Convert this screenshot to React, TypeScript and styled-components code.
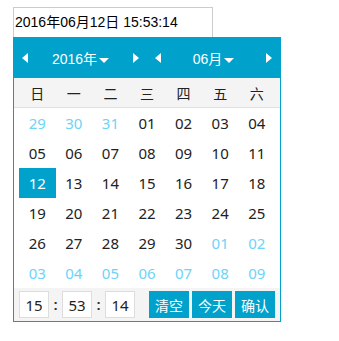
import React from 'react';
import styled, {createGlobalStyle} from "styled-components";

const blue = '#00a2cc';
const lightBlue = '#6dd3f7';

const GlobalStyle = createGlobalStyle`
    body {
        margin: 0;
        background: #fff;
        font-family: "Liberation Sans", "Noto Sans CJK SC", sans-serif;
    }
`

type Day = { n: string; other?: boolean; active?: boolean };

const weeks: Day[][] = [
    [{n: '29', other: true}, {n: '30', other: true}, {n: '31', other: true}, {n: '01'}, {n: '02'}, {n: '03'}, {n: '04'}],
    [{n: '05'}, {n: '06'}, {n: '07'}, {n: '08'}, {n: '09'}, {n: '10'}, {n: '11'}],
    [{n: '12', active: true}, {n: '13'}, {n: '14'}, {n: '15'}, {n: '16'}, {n: '17'}, {n: '18'}],
    [{n: '19'}, {n: '20'}, {n: '21'}, {n: '22'}, {n: '23'}, {n: '24'}, {n: '25'}],
    [{n: '26'}, {n: '27'}, {n: '28'}, {n: '29'}, {n: '30'}, {n: '01', other: true}, {n: '02', other: true}],
    [{n: '03', other: true}, {n: '04', other: true}, {n: '05', other: true}, {n: '06', other: true}, {n: '07', other: true}, {n: '08', other: true}, {n: '09', other: true}],
];

const weekNames = ['日', '一', '二', '三', '四', '五', '六'];

export default function App() {
    return (
        <Page>
            <GlobalStyle/>
            <DateInput>2016年06月12日 15:53:14</DateInput>
            <Picker>
                <Header>
                    <Switcher>
                        <Arrow dir="left"/>
                        <Title>2016年<Caret/></Title>
                        <Arrow dir="right"/>
                    </Switcher>
                    <Switcher>
                        <Arrow dir="left"/>
                        <Title>06月<Caret/></Title>
                        <Arrow dir="right"/>
                    </Switcher>
                </Header>
                <WeekRow>
                    {weekNames.map(w => <WeekCell key={w}>{w}</WeekCell>)}
                </WeekRow>
                <Days>
                    {weeks.flat().map((d, i) => (
                        <DayCell key={i} $other={d.other} $active={d.active}>{d.n}</DayCell>
                    ))}
                </Days>
                <Footer>
                    <Time>
                        <TimeBox>15</TimeBox>
                        <Colon>:</Colon>
                        <TimeBox>53</TimeBox>
                        <Colon>:</Colon>
                        <TimeBox>14</TimeBox>
                    </Time>
                    <Buttons>
                        <Button>清空</Button>
                        <Button>今天</Button>
                        <Button>确认</Button>
                    </Buttons>
                </Footer>
            </Picker>
        </Page>
    );
}

const Page = styled.div`
    padding: 7px 0 0 13px;
`

const DateInput = styled.div`
    box-sizing: border-box;
    width: 200px;
    height: 30px;
    border: 1px solid #ccc;
    border-bottom: none;
    padding-left: 1px;
    font-size: 14px;
    line-height: 29px;
    color: #000;
`

const Picker = styled.div`
    box-sizing: border-box;
    width: 268px;
    border: 1px solid ${blue};
    background: #fff;
`

const Header = styled.div`
    height: 40px;
    background: ${blue};
    display: flex;
`

const Switcher = styled.div`
    flex: 1;
    display: flex;
    align-items: center;
    justify-content: space-between;
    padding: 0 8px;
`

const Arrow = styled.span<{ dir: 'left' | 'right' }>`
    width: 0;
    height: 0;
    border-top: 5px solid transparent;
    border-bottom: 5px solid transparent;
    ${p => p.dir === 'left'
            ? 'border-right: 6px solid #fff;'
            : 'border-left: 6px solid #fff;'}
`

const Title = styled.span`
    display: flex;
    align-items: center;
    color: #fff;
    font-size: 14px;
`

const Caret = styled.span`
    margin: 5px 0 0 2px;
    width: 0;
    height: 0;
    border-left: 5px solid transparent;
    border-right: 5px solid transparent;
    border-top: 5px solid #fff;
`

const WeekRow = styled.div`
    height: 29px;
    background: #f4f4f4;
    border-bottom: 1px solid #e0e0e0;
    padding: 0 5px;
    display: grid;
    grid-template-columns: repeat(7, 1fr);
`

const WeekCell = styled.div`
    font-size: 14px;
    color: #222;
    line-height: 30px;
    text-align: center;
    font-family: "Noto Sans CJK SC", sans-serif;
`

const Days = styled.div`
    padding: 0 5px;
    display: grid;
    grid-template-columns: repeat(7, 1fr);
    grid-auto-rows: 30px;
`

const DayCell = styled.div<{ $other?: boolean; $active?: boolean }>`
    display: flex;
    align-items: center;
    justify-content: center;
    font-family: "Noto Sans", sans-serif;
    font-size: 15px;
    color: ${p => p.$active ? '#fff' : p.$other ? lightBlue : '#222'};
    background: ${p => p.$active ? blue : 'transparent'};
`

const Footer = styled.div`
    height: 33px;
    background: #f4f4f4;
    padding: 3px 5px;
    box-sizing: border-box;
    display: flex;
    justify-content: space-between;
`

const Time = styled.div`
    display: flex;
    align-items: center;
`

const TimeBox = styled.div`
    box-sizing: border-box;
    width: 30px;
    height: 27px;
    background: #fff;
    border: 1px solid #ddd;
    display: flex;
    align-items: center;
    justify-content: center;
    font-family: "Noto Sans", sans-serif;
    font-size: 15px;
    color: #222;
`

const Colon = styled.span`
    width: 13px;
    text-align: center;
    font-size: 14px;
    font-weight: bold;
    color: #333;
`

const Buttons = styled.div`
    display: flex;
    gap: 3px;
`

const Button = styled.div`
    width: 40px;
    height: 27px;
    background: ${blue};
    color: #fff;
    font-size: 14px;
    font-family: "Noto Sans CJK SC", sans-serif;
    display: flex;
    align-items: center;
    justify-content: center;
`
